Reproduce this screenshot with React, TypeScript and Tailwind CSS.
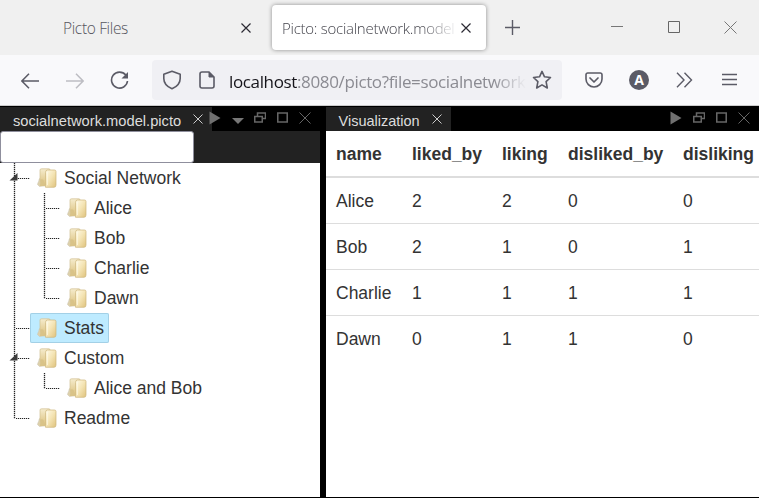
import type { ReactNode } from "react";

const ARIAL = "font-['Liberation_Sans',Arial,sans-serif]";
const SEGOE = "font-['Open_Sans','Noto_Sans',sans-serif]";

function Icon({ w, h, className = "", children }: { w: number; h: number; className?: string; children: ReactNode }) {
  return (
    <svg width={w} height={h} viewBox={`0 0 ${w} ${h}`} fill="none" stroke="currentColor" className={`block shrink-0 ${className}`}>
      {children}
    </svg>
  );
}

function TabStrip() {
  return (
    <div className={`flex h-[55px] items-start bg-[#f0f0f0] text-[#5b5b66] ${SEGOE}`}>
      <div className="flex h-[55px] w-[272px] shrink-0 items-center pl-[63px]">
        <span className="w-[178px] whitespace-nowrap text-[15.500px] font-light leading-5 tracking-[-0.35px] text-[#55555d]">Picto Files</span>
        <Icon w={10} h={10} className="text-[#2b2a33]"><path d="M.5.5l9 9M9.500.5l-9 9" strokeWidth="1.2" /></Icon>
      </div>
      <div className="mt-[5px] flex h-[45px] w-[214px] shrink-0 items-center rounded-[4px] bg-white pl-[10px] shadow-[0_0_4px_rgba(0,0,0,0.42)]">
        <span className="w-[177px] overflow-hidden whitespace-nowrap text-[15px] font-light leading-6 tracking-[-0.26px] text-[#44444c] [mask-image:linear-gradient(to_right,#000_78%,transparent)]">Picto: socialnetwork.model</span>
        <Icon w={10} h={10} className="ml-[2px] text-[#2b2a33]"><path d="M.5.5l9 9M9.500.5l-9 9" strokeWidth="1.2" /></Icon>
      </div>
      <Icon w={15} h={15} className="ml-[19px] mt-5"><path d="M7.500 0v15M0 7.500h15" strokeWidth="1.4" /></Icon>
      <Icon w={12} h={12} className="ml-[91px] mt-[21px] text-[#777]"><path d="M0 5.500h12" /></Icon>
      <Icon w={12} h={12} className="ml-[45px] mt-[21px] text-[#666]"><path d="M.5.5h11v11H.5z" /></Icon>
      <Icon w={13} h={13} className="ml-11 mt-[21px] text-[#777]"><path d="M.5.5l12 12M12.500.5l-12 12" /></Icon>
    </div>
  );
}

function NavBar() {
  return (
    <div className={`flex h-[51px] items-start border-b border-[#ccc] bg-[#f9f9fb] text-[#5b5b66] ${SEGOE}`}>
      <Icon w={18} h={16} className="ml-[21px] mt-[18px]"><path d="M8 .7L.9 8 8 15.300M1 8h17" strokeWidth="1.5" /></Icon>
      <Icon w={18} h={16} className="ml-[27px] mt-[18px] text-[#bdbdc3]"><path d="M10 .7L17.100 8 10 15.300M17 8H0" strokeWidth="1.5" /></Icon>
      <Icon w={20} h={20} className="ml-[26px] mt-[15px]">
        <path d="M15.800 5.100A8 8 0 1 0 17.500 11" strokeWidth="1.6" />
        <path d="M18 2v6.500h-6.500z" fill="currentColor" stroke="none" />
      </Icon>
      <div className="ml-[22px] mt-[5px] flex h-10 w-[410px] items-center rounded-[4px] bg-[#f0f0f4]">
        <Icon w={20} h={20} className="ml-[10px]"><path d="M10 1.200l8.200 3v4.200c0 5-3.500 8.300-8.200 10.400C5.300 16.700 1.800 13.400 1.800 8.400V4.200z" strokeWidth="1.6" strokeLinejoin="round" /></Icon>
        <Icon w={16} h={18} className="ml-[17px]">
          <path d="M10 1H3a2 2 0 0 0-2 2v12a2 2 0 0 0 2 2h10a2 2 0 0 0 2-2V6z" strokeWidth="1.6" />
          <path d="M10 1v5h5z" fill="currentColor" />
        </Icon>
        <span className="ml-[14px] w-[297px] overflow-hidden whitespace-nowrap pt-1 text-[17px] leading-7 tracking-[-0.36px] text-[#8b8b92] [mask-image:linear-gradient(to_right,#000_89%,transparent)]">
          <span className="text-[#15141a]">localhost</span>:8080/picto?file=socialnetwork
        </span>
        <Icon w={20} h={20} className="ml-[6px]"><path d="M10 1.400l2.500 5.400 6 .7-4.400 4.100 1.200 6.400-5.300-3.100L4.700 18l1.200-6.400L1.500 7.500l6-.7z" strokeWidth="1.6" strokeLinejoin="round" /></Icon>
      </div>
      <Icon w={18} h={16} className="ml-[23px] mt-[17px]">
        <path d="M2.700 1h12.600A1.700 1.700 0 0 1 17 2.700V7a8 8 0 0 1-16 0V2.700A1.700 1.700 0 0 1 2.700 1z" strokeWidth="1.6" />
        <path d="M5 6l4 4 4-4" strokeWidth="1.7" strokeLinecap="round" strokeLinejoin="round" />
      </Icon>
      <div className="ml-[26px] mt-[15px] flex size-5 items-center justify-center rounded-full bg-[#5b5b66] text-[14px] font-bold leading-5 text-white">A</div>
      <Icon w={17} h={16} className="ml-[27px] mt-[17px]"><path d="M1 .8L8 8l-7 7.200M8.500.8l7 7.200-7 7.200" strokeWidth="1.4" /></Icon>
      <Icon w={15} h={13} className="ml-[29px] mt-[18px]"><path d="M0 1.500h15M0 6.500h15M0 11.500h15" strokeWidth="1.3" /></Icon>
    </div>
  );
}

function PanelClose() {
  return <Icon w={10} h={10} className="text-[#ccc]"><path d="M.5.5l9 9M9.500.5l-9 9" /></Icon>;
}

function Play() {
  return <Icon w={12} h={14}><path d="M.5.500L11.500 7 .5 13.500z" fill="#707070" stroke="none" /></Icon>;
}

function WindowControls() {
  return (
    <>
      <Icon w={12} h={12}><path d="M3.500 4V1h8v5.500H8M.75 4.500h7.500V10H.75z" strokeWidth="1.5" /></Icon>
      <Icon w={11} h={11} className="ml-[11px]"><path d="M.75 1h9.500v9H.75z" strokeWidth="1.6" /></Icon>
      <Icon w={12} h={12} className="ml-[11px]"><path d="M.5.5l11 11M11.500.5l-11 11" /></Icon>
    </>
  );
}

function Guide({ up = true, down = false, branch = true, open = false }: { up?: boolean; down?: boolean; branch?: boolean; open?: boolean }) {
  return (
    <Icon w={30} h={30} className="text-[#222]">
      {up && <path d="M14.500 0v16" strokeDasharray="1.2 .8" strokeWidth="1.3" />}
      {down && <path d="M14.500 16v14" strokeDasharray="1.2 .8" strokeWidth="1.3" />}
      {branch && <path d="M16 15.500h14" strokeDasharray="1.2 .8" strokeWidth="1.2" />}
      {open && <path d="M9.500 17.500L17.500 10v7.500z" fill="#3c3c3c" stroke="none" />}
    </Icon>
  );
}

function Folder() {
  return (
    <Icon w={20} h={20}>
      <defs>
        <linearGradient id="sheet" x1="0" y1="0" x2="1" y2="1">
          <stop offset="0" stopColor="#fffbe8" />
          <stop offset=".5" stopColor="#f4e4b4" />
          <stop offset="1" stopColor="#dfc27c" />
        </linearGradient>
        <linearGradient id="back" x1="0" y1="0" x2="0" y2="1">
          <stop offset="0" stopColor="#f5ecce" />
          <stop offset="1" stopColor="#dcc17c" />
        </linearGradient>
      </defs>
      <path d="M.5 16.500C1 14 2 13.500 2 12s1.500-2.500 3-1.500L8 17.500 2.500 18.500z" fill="#ddd0aa" stroke="#cfc7b2" strokeWidth=".6" />
      <path d="M3 2Q3 .8 4.500.8H12Q13 .8 13 2V17H5L3 11z" fill="url(#back)" stroke="#d3c193" strokeWidth=".7" />
      <path d="M3.500 11.500q2-1 3 .8L8.500 18.200 3 18z" fill="#d9c388" stroke="none" />
      <path d="M8.500 4.500Q8.500 2 10.500 2H17.500Q19 2 19 3.500V17Q19 19.300 17 19.300H8.500z" fill="url(#sheet)" stroke="#cdb47a" strokeWidth=".7" />
      <path d="M10.500 4v13" stroke="#fffbed" strokeOpacity=".6" />
    </Icon>
  );
}

interface Row { label: string; child?: boolean; last?: boolean; open?: boolean; selected?: boolean }

const rows: Row[] = [
  { label: "Social Network", open: true },
  { label: "Alice", child: true },
  { label: "Bob", child: true },
  { label: "Charlie", child: true },
  { label: "Dawn", child: true, last: true },
  { label: "Stats", selected: true },
  { label: "Custom", open: true },
  { label: "Alice and Bob", child: true, last: true },
  { label: "Readme", last: true },
];

function Tree() {
  return (
    <div className="text-[17.500px] text-[#333]">
      {rows.map((r) => (
        <div key={r.label} className="flex h-[30px]">
          {r.child && <Guide down branch={false} />}
          <Guide down={!r.last} open={r.open} />
          <div className={`flex h-[30px] items-center rounded-[2px] pl-[7px] pr-[5px] ${r.selected ? "bg-[#beebff] shadow-[inset_0_0_0_1px_#a3d0e6]" : ""}`}>
            <Folder />
            <span className="ml-[7px] whitespace-nowrap leading-[30px]">{r.label}</span>
          </div>
        </div>
      ))}
    </div>
  );
}

const data = [
  ["Alice", 2, 2, 0, 0],
  ["Bob", 2, 1, 0, 1],
  ["Charlie", 1, 1, 1, 1],
  ["Dawn", 0, 1, 1, 0],
];
const cols = "grid grid-cols-[76px_90px_66px_115px_76px] pl-[10px]";

export default function App() {
  return (
    <div className="flex h-[498px] w-[759px] flex-col overflow-hidden bg-black">
      <TabStrip />
      <NavBar />
      <div className={`flex h-[391px] pt-px ${ARIAL}`}>
        <section className="flex w-[320px] flex-col">
          <div className="flex h-6 items-center text-[#666]">
            <div className="flex h-6 w-[209px] items-center bg-[#222] pl-[13px] text-[14.700px] text-[#ddd]">
              <span className="w-[180px] whitespace-nowrap pt-[3px] leading-5">socialnetwork.model.picto</span>
              <PanelClose />
            </div>
            <div className="flex h-6 items-center bg-[linear-gradient(to_right,#222_3px,transparent_3px)] pb-[3px]">
              <Play />
              <Icon w={12} h={6} className="ml-[11px] mt-[6px]"><path d="M0 0h12L6 6z" fill="#777" stroke="none" /></Icon>
              <span className="w-[10px]" />
              <WindowControls />
            </div>
          </div>
          <div className="h-8 bg-[#222]">
            <input className="block h-8 w-[194px] rounded-[3px] border border-[#8f8f9d] bg-white px-2 outline-none" aria-label="Filter" />
          </div>
          <div className="grow bg-white"><Tree /></div>
        </section>
        <section className="ml-[6px] flex w-[433px] flex-col">
          <div className="flex h-6 items-center text-[#666]">
            <div className="flex h-6 w-[125px] items-center bg-[#222] pl-[12.500px] text-[14.500px] text-[#ddd]">
              <span className="w-[93px] whitespace-nowrap pt-[3px] leading-5">Visualization</span>
              <PanelClose />
            </div>
            <div className="ml-[219px] flex h-6 items-center pb-[3px]">
              <Play />
              <span className="w-[11px]" />
              <WindowControls />
            </div>
          </div>
          <div className="grow overflow-hidden bg-white text-[17.500px] text-[#333]">
            <div className={`${cols} h-[47px] border-b-2 border-[#ddd] font-bold leading-[46px]`}>
              {["name", "liked_by", "liking", "disliked_by", "disliking"].map((c) => <span key={c}>{c}</span>)}
            </div>
            {data.map((row, i) => (
              <div key={i} className={`${cols} h-[46px] leading-[46px] ${i < 3 ? "border-b border-[#ddd]" : ""}`}>
                {row.map((v, j) => <span key={j}>{v}</span>)}
              </div>
            ))}
          </div>
        </section>
      </div>
    </div>
  );
}
